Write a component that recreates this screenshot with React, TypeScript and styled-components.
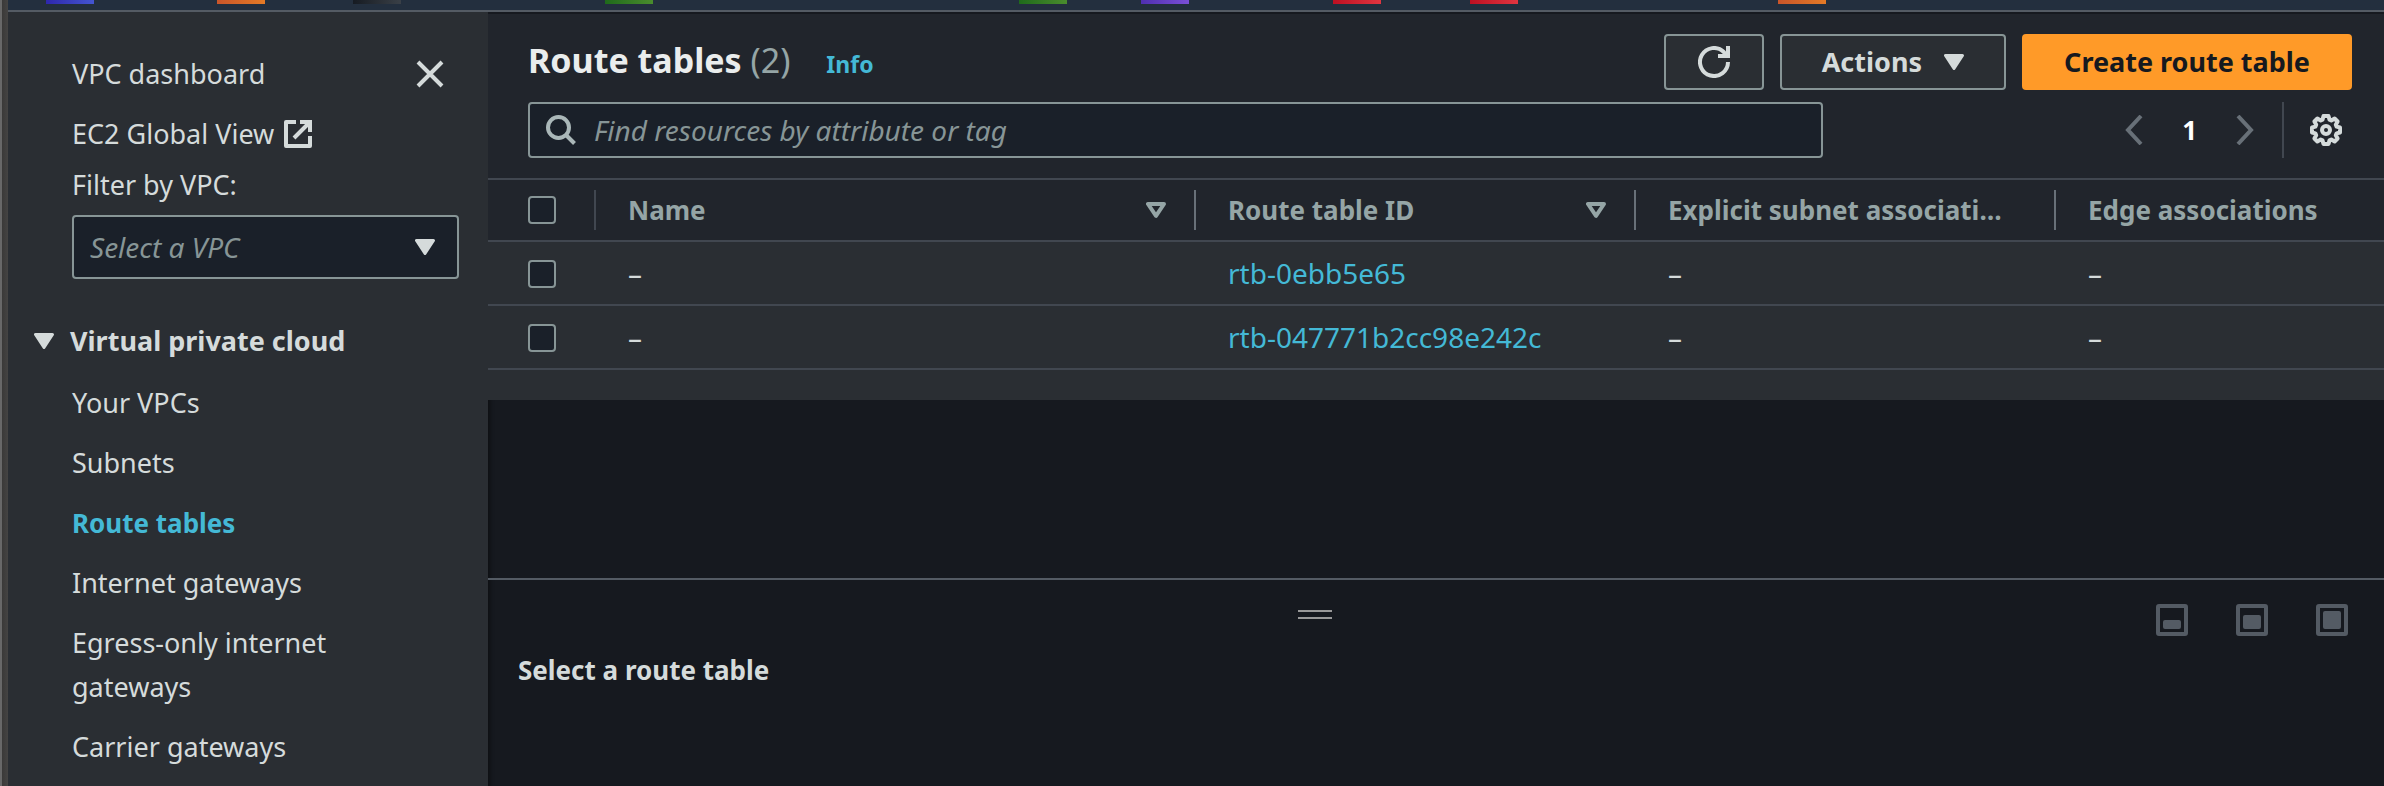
import React from 'react';
import styled, { createGlobalStyle, css } from 'styled-components';

const color = {
  page: '#16191f',
  bar: '#232f3e',
  panel: '#2a2e33',
  header: '#21252c',
  input: '#1a2029',
  line: '#414750',
  lineStrong: '#545b64',
  outline: '#879596',
  muted: '#95a5a6',
  text: '#d5dbdb',
  heading: '#eaeded',
  link: '#44b9d6',
  accent: '#ff9a28',
  disabled: '#687078',
};

const GlobalStyle = createGlobalStyle`
  *, *::before, *::after { box-sizing: border-box; }
  body { margin: 0; background: ${color.page}; }
  body, button, input, select {
    font-family: "Noto Sans", "Open Sans", sans-serif;
    font-size: 27px;
    line-height: 44px;
    color: ${color.text};
  }
  ul, h1, h2 { margin: 0; padding: 0; list-style: none; }
  svg { display: block; flex: none; }
`;

const Frame = styled.div`
  display: flex;
  min-height: 100vh;
`;

const WindowEdge = styled.div`
  flex: none;
  width: 8px;
  border-left: 2px solid #686868;
  background: linear-gradient(90deg, #3a3938, #454443);
`;

const Shell = styled.div`
  flex: 1;
  min-width: 0;
  display: flex;
  flex-direction: column;
`;

const FavoritesBar = styled.header`
  display: flex;
  height: 12px;
  padding-left: 38px;
  background: ${color.bar};
  border-bottom: 2px solid ${color.lineStrong};
`;

const Favorite = styled.span<{ $from: string; $to: string; $gap: number }>`
  flex: none;
  width: 48px;
  height: 4px;
  margin-right: ${(p) => p.$gap}px;
  background: linear-gradient(90deg, ${(p) => p.$from}, ${(p) => p.$to});
`;

const Body = styled.div`
  flex: 1;
  display: flex;
`;

const SideNav = styled.nav`
  flex: none;
  width: 480px;
  padding: 40px 29px 6px 64px;
  background: ${color.panel};
`;

const NavRow = styled.div`
  display: flex;
  align-items: center;
  justify-content: space-between;
  margin-bottom: 16px;
`;

const linkStyle = css`
  color: ${color.text};
  text-decoration: none;
`;

const NavLink = styled.a<{ $active?: boolean }>`
  ${linkStyle}
  display: inline-flex;
  align-items: center;
  gap: 10px;
  ${(p) =>
    p.$active &&
    css`
      color: ${color.link};
      font-size: 26px;
      font-weight: 700;
    `}
`;

const IconButton = styled.button`
  display: flex;
  align-items: center;
  justify-content: center;
  padding: 0;
  border: 0;
  background: none;
  color: ${(p) => (p.disabled ? color.disabled : color.text)};
`;

const CloseButton = styled(IconButton)`
  margin-right: 15px;
`;

const FilterLabel = styled.label`
  display: block;
  margin: 7px 0 8px;
`;

const SelectBox = styled.div`
  display: grid;
  align-items: center;
  height: 64px;
  margin-bottom: 40px;
  border: 2px solid ${color.outline};
  border-radius: 4px;
  background: ${color.input};

  > * { grid-area: 1 / 1; }
  > svg { justify-self: end; margin-right: 22px; pointer-events: none; }
`;

const Select = styled.select`
  appearance: none;
  width: 100%;
  padding: 0 56px 0 16px;
  border: 0;
  background: none;
  color: ${color.outline};
  font-size: 28px;
  font-style: italic;
`;

const SectionToggle = styled.button`
  display: flex;
  align-items: center;
  gap: 16px;
  margin: 0 0 18px -38px;
  padding: 0;
  border: 0;
  background: none;
  font-weight: 700;
`;

const NavList = styled.ul`
  display: flex;
  flex-direction: column;
  gap: 16px;
  max-width: 300px;
`;

const Main = styled.main`
  flex: 1;
  min-width: 0;
  display: flex;
  flex-direction: column;
  border-top: 2px solid ${color.page};
  background: ${color.page};
  box-shadow: inset 6px 0 4px -4px rgba(0, 0, 0, 0.4);
`;

const Card = styled.section`
  padding-bottom: 30px;
  background: ${color.panel};
`;

const CardHeader = styled.div`
  display: flex;
  flex-direction: column;
  gap: 12px;
  padding: 20px 32px 20px 40px;
  background: ${color.header};
`;

const HeaderRow = styled.div`
  display: flex;
  align-items: center;
  justify-content: space-between;
  height: 56px;
`;

const TitleGroup = styled.div`
  display: flex;
  align-items: baseline;
  gap: 36px;
`;

const Title = styled.h1`
  color: ${color.heading};
  font-size: 34px;
  line-height: 44px;
  font-weight: 700;
`;

const Counter = styled.span`
  color: ${color.muted};
  font-weight: 400;
`;

const InfoLink = styled.a`
  color: ${color.link};
  font-size: 23px;
  font-weight: 700;
  text-decoration: none;
`;

const Actions = styled.div`
  display: flex;
  gap: 16px;
`;

const Button = styled.button<{ $primary?: boolean; $iconOnly?: boolean }>`
  display: flex;
  align-items: center;
  justify-content: center;
  gap: 22px;
  height: 56px;
  padding: 0 ${(p) => (p.$iconOnly ? 32 : 40)}px;
  border: 2px solid ${(p) => (p.$primary ? color.accent : color.outline)};
  border-radius: 4px;
  background: ${(p) => (p.$primary ? color.accent : color.panel)};
  color: ${(p) => (p.$primary ? color.page : color.text)};
  font-weight: 700;
`;

const SearchBox = styled.label`
  flex: 0 1 71%;
  display: flex;
  align-items: center;
  gap: 18px;
  height: 56px;
  padding: 0 16px;
  border: 2px solid ${color.outline};
  border-radius: 4px;
  background: ${color.input};
  color: #aab7b8;
`;

const SearchInput = styled.input`
  flex: 1;
  min-width: 0;
  padding: 0;
  border: 0;
  outline: 0;
  background: none;
  font-size: 28px;

  &::placeholder {
    color: ${color.outline};
    font-style: italic;
    opacity: 1;
  }
`;

const Pager = styled.div`
  display: flex;
  align-items: center;
  gap: 39px;
`;

const PageNumber = styled.span`
  color: #fff;
  font-size: 26px;
  font-weight: 700;
`;

const Preferences = styled.div`
  display: flex;
  align-items: center;
  height: 56px;
  margin-left: -11px;
  padding: 0 10px 0 26px;
  border-left: 2px solid ${color.line};
`;

const Table = styled.table`
  width: 100%;
  table-layout: fixed;
  border-collapse: separate;
  border-spacing: 0;
`;

const Col = styled.col<{ $width?: number }>`
  width: ${(p) => (p.$width ? `${p.$width}px` : 'auto')};
`;

const HeadCell = styled.th`
  height: 64px;
  padding: 0;
  border-top: 2px solid ${color.line};
  border-bottom: 2px solid ${color.line};
  background: ${color.header};
  color: ${color.muted};
  font-size: 26px;
  text-align: left;
`;

const HeadContent = styled.div<{ $tone?: string; $sortable?: boolean }>`
  display: flex;
  align-items: center;
  justify-content: space-between;
  gap: 16px;
  height: 40px;
  padding: 0 ${(p) => (p.$sortable ? 28 : 40)}px 0 32px;
  border-right: 2px solid ${(p) => p.$tone ?? 'transparent'};
`;

const HeadLabel = styled.span`
  overflow: hidden;
  text-overflow: ellipsis;
  white-space: nowrap;
`;

const SelectionCell = styled(HeadContent)`
  padding: 0 0 0 40px;
`;

const Cell = styled.td`
  height: 64px;
  padding: 0 0 0 32px;
  border-bottom: 2px solid ${color.line};
  font-size: 28px;
`;

const CheckCell = styled(Cell)`
  padding: 2px 0 0 40px;
`;

const Checkbox = styled.input`
  appearance: none;
  display: block;
  flex: none;
  width: 28px;
  height: 28px;
  margin: 0;
  border: 2px solid ${color.outline};
  border-radius: 4px;
  background: ${color.input};
`;

const ResourceLink = styled.a`
  color: ${color.link};
  text-decoration: none;
`;

const SplitPanel = styled.section`
  flex: none;
  min-height: 208px;
  margin-top: auto;
  border-top: 2px solid ${color.lineStrong};
`;

const SplitToolbar = styled.div`
  display: flex;
  align-items: center;
  height: 76px;
  padding-right: 36px;
`;

const DragHandle = styled.div`
  flex: 1;
  display: flex;
  justify-content: center;
  padding-bottom: 6px;
  color: #999;
`;

const SizeButtons = styled.div`
  display: flex;
  gap: 48px;
  margin-top: 4px;
  padding-left: 14px;
`;

const SplitTitle = styled.h2`
  padding-left: 30px;
  margin-top: -8px;
  font-size: 26px;
  line-height: 44px;
  font-weight: 700;
`;

const SolidCaret = () => (
  <svg width="20" height="16" viewBox="0 0 20 16" aria-hidden="true">
    <path d="M1.5 1.5h17L10 14.5z" fill={color.text} stroke={color.text} strokeWidth="3" strokeLinejoin="round" />
  </svg>
);

const SortCaret = () => (
  <svg width="20" height="16" viewBox="0 0 20 16" aria-hidden="true">
    <path d="M2 2h16L10 13.8z" fill="none" stroke={color.muted} strokeWidth="4" strokeLinejoin="round" />
  </svg>
);

const CloseIcon = () => (
  <svg width="28" height="28" viewBox="0 0 28 28" fill="none" stroke="currentColor" strokeWidth="4">
    <path d="M2 2l24 24M26 2L2 26" />
  </svg>
);

const ExternalIcon = () => (
  <svg width="28" height="28" viewBox="0 0 28 28" fill="none" stroke="currentColor" strokeWidth="4" aria-hidden="true">
    <path d="M12 2H2v24h24V16" strokeLinejoin="round" />
    <path d="M16 2h10v10M26 2L10 18" />
  </svg>
);

const RefreshIcon = () => (
  <svg width="32" height="32" viewBox="0 0 32 32" fill="none" stroke="currentColor" strokeWidth="4">
    <path d="M30 16a14 14 0 1 1-4.2-10L28 9" />
    <path d="M30 0v10H20" />
  </svg>
);

const SearchIcon = () => (
  <svg width="30" height="30" viewBox="0 0 30 30" fill="none" stroke="currentColor" strokeWidth="4" aria-hidden="true">
    <circle cx="12.5" cy="12.5" r="10.5" />
    <path d="M20 20l8.5 8.5" />
  </svg>
);

const ChevronIcon = ({ right = false }: { right?: boolean }) => (
  <svg width="18" height="30" viewBox="0 0 18 30" fill="none" stroke="currentColor" strokeWidth="4">
    <path d={right ? 'M2 1l13 14L2 29' : 'M16 1L3 15l13 14'} />
  </svg>
);

const GearIcon = () => (
  <svg width="32" height="32" viewBox="0 0 32 32" fill="none" stroke="currentColor" strokeWidth="4" strokeLinejoin="round">
    <path d="M13.5 2h5l1 3.6 1.8.8 3.3-1.9 3 3-1.8 3.3.8 1.8 3.4.9v5l-3.4.9-.8 1.8 1.8 3.3-3 3-3.3-1.9-1.8.8-1 3.6h-5l-1-3.6-1.8-.8-3.3 1.9-3-3 1.8-3.3-.8-1.8L2 18.5v-5l3.4-.9.8-1.8-1.8-3.3 3-3 3.3 1.9 1.8-.8z" />
    <circle cx="16" cy="16" r="4" />
  </svg>
);

const HandleIcon = () => (
  <svg width="34" height="10" viewBox="0 0 34 10" aria-hidden="true">
    <path d="M0 1h34M0 8h34" stroke="currentColor" strokeWidth="2" />
  </svg>
);

const PanelSizeIcon = ({ fill }: { fill: number }) => (
  <svg width="32" height="32" viewBox="0 0 32 32">
    <rect x="2" y="2" width="28" height="28" rx="1" fill="none" stroke={color.lineStrong} strokeWidth="4" />
    <rect x="7" y={25 - fill} width="18" height={fill} rx="2" fill={color.lineStrong} />
  </svg>
);

const favorites = [
  { from: '#2e27ad', to: '#4455d0', gap: 123 },
  { from: '#c9552a', to: '#e37a26', gap: 88 },
  { from: '#161b22', to: '#3a4047', gap: 204 },
  { from: '#1f6a1b', to: '#4a8c2d', gap: 366 },
  { from: '#1f6a1b', to: '#4a8c2d', gap: 74 },
  { from: '#4f2fb0', to: '#7a4fd6', gap: 144 },
  { from: '#bd1022', to: '#e03540', gap: 89 },
  { from: '#bd1022', to: '#e03540', gap: 260 },
  { from: '#c9552a', to: '#e37a26', gap: 0 },
];

const navItems = [
  'Your VPCs',
  'Subnets',
  'Route tables',
  'Internet gateways',
  'Egress-only internet gateways',
  'Carrier gateways',
];

const columns = [
  { label: 'Name', width: 600, sortable: true },
  { label: 'Route table ID', width: 440, sortable: true },
  { label: 'Explicit subnet associations', width: 420, sortable: false },
  { label: 'Edge associations', width: undefined, sortable: false },
];

const rows = ['rtb-0ebb5e65', 'rtb-047771b2cc98e242c'];

const panelSizes = [
  { label: 'Small panel', fill: 9 },
  { label: 'Medium panel', fill: 14 },
  { label: 'Full panel', fill: 18 },
];

export default function App() {
  return (
    <>
      <GlobalStyle />
      <Frame>
        <WindowEdge />
        <Shell>
          <FavoritesBar>
            {favorites.map((f, i) => (
              <Favorite key={i} $from={f.from} $to={f.to} $gap={f.gap} />
            ))}
          </FavoritesBar>
          <Body>
            <SideNav>
              <NavRow>
                <NavLink href="#dashboard">VPC dashboard</NavLink>
                <CloseButton type="button" aria-label="Close navigation">
                  <CloseIcon />
                </CloseButton>
              </NavRow>
              <NavLink href="#global-view">
                EC2 Global View <ExternalIcon />
              </NavLink>
              <FilterLabel htmlFor="vpc-filter">Filter by VPC:</FilterLabel>
              <SelectBox>
                <Select id="vpc-filter" defaultValue="">
                  <option value="">Select a VPC</option>
                </Select>
                <SolidCaret />
              </SelectBox>
              <SectionToggle type="button" aria-expanded="true">
                <SolidCaret /> Virtual private cloud
              </SectionToggle>
              <NavList>
                {navItems.map((item) => (
                  <li key={item}>
                    <NavLink href="#nav" $active={item === 'Route tables'}>
                      {item}
                    </NavLink>
                  </li>
                ))}
              </NavList>
            </SideNav>
            <Main>
              <Card>
                <CardHeader>
                  <HeaderRow>
                    <TitleGroup>
                      <Title>
                        Route tables <Counter>(2)</Counter>
                      </Title>
                      <InfoLink href="#info">Info</InfoLink>
                    </TitleGroup>
                    <Actions>
                      <Button type="button" $iconOnly aria-label="Refresh">
                        <RefreshIcon />
                      </Button>
                      <Button type="button">
                        Actions <SolidCaret />
                      </Button>
                      <Button type="button" $primary>
                        Create route table
                      </Button>
                    </Actions>
                  </HeaderRow>
                  <HeaderRow>
                    <SearchBox>
                      <SearchIcon />
                      <SearchInput
                        type="text"
                        aria-label="Find resources"
                        placeholder="Find resources by attribute or tag"
                      />
                    </SearchBox>
                    <Pager>
                      <IconButton type="button" disabled aria-label="Previous page">
                        <ChevronIcon />
                      </IconButton>
                      <PageNumber>1</PageNumber>
                      <IconButton type="button" disabled aria-label="Next page">
                        <ChevronIcon right />
                      </IconButton>
                      <Preferences>
                        <IconButton type="button" aria-label="Preferences">
                          <GearIcon />
                        </IconButton>
                      </Preferences>
                    </Pager>
                  </HeaderRow>
                </CardHeader>
                <Table>
                  <colgroup>
                    <Col $width={108} />
                    {columns.map((c) => (
                      <Col key={c.label} $width={c.width} />
                    ))}
                  </colgroup>
                  <thead>
                    <tr>
                      <HeadCell scope="col">
                        <SelectionCell $tone={color.line}>
                          <Checkbox type="checkbox" aria-label="Select all route tables" />
                        </SelectionCell>
                      </HeadCell>
                      {columns.map((c) => (
                        <HeadCell key={c.label} scope="col">
                          <HeadContent $tone={c.width ? color.disabled : undefined} $sortable={c.sortable}>
                            <HeadLabel>{c.label}</HeadLabel>
                            {c.sortable && <SortCaret />}
                          </HeadContent>
                        </HeadCell>
                      ))}
                    </tr>
                  </thead>
                  <tbody>
                    {rows.map((id) => (
                      <tr key={id}>
                        <CheckCell>
                          <Checkbox type="checkbox" aria-label={`Select ${id}`} />
                        </CheckCell>
                        <Cell>–</Cell>
                        <Cell>
                          <ResourceLink href="#route-table">{id}</ResourceLink>
                        </Cell>
                        <Cell>–</Cell>
                        <Cell>–</Cell>
                      </tr>
                    ))}
                  </tbody>
                </Table>
              </Card>
              <SplitPanel>
                <SplitToolbar>
                  <DragHandle>
                    <HandleIcon />
                  </DragHandle>
                  <SizeButtons>
                    {panelSizes.map((s) => (
                      <IconButton key={s.label} type="button" aria-label={s.label}>
                        <PanelSizeIcon fill={s.fill} />
                      </IconButton>
                    ))}
                  </SizeButtons>
                </SplitToolbar>
                <SplitTitle>Select a route table</SplitTitle>
              </SplitPanel>
            </Main>
          </Body>
        </Shell>
      </Frame>
    </>
  );
}
